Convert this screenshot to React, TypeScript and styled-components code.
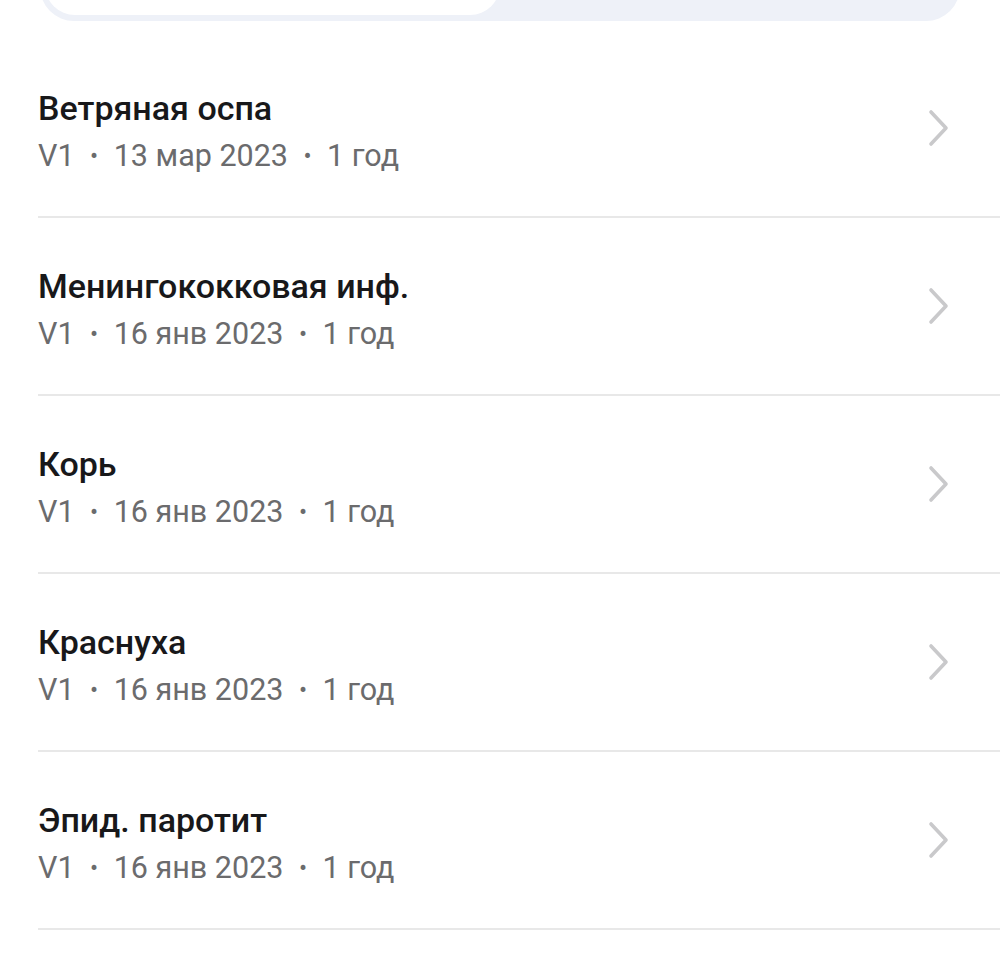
import styled, { createGlobalStyle } from 'styled-components';

const GlobalStyle = createGlobalStyle`
  html, body {
    margin: 0;
    padding: 0;
    background: #ffffff;
    font-family: Roboto, "Noto Sans", Arial, sans-serif;
    overflow: hidden;
  }
`;

const Screen = styled.div`
  width: 1000px;
  height: 962px;
  overflow: hidden;
  background: #ffffff;
`;

const Segmented = styled.div`
  margin: -55px 40px 0 40px;
  height: 76px;
  box-sizing: border-box;
  padding: 6px 5px;
  background: #eef1f8;
  border-radius: 34px;
  display: flex;
`;

const Segment = styled.div<{ $active?: boolean }>`
  flex: 1;
  border-radius: 30px;
  background: ${p => (p.$active ? '#ffffff' : 'transparent')};
`;

const List = styled.ul`
  list-style: none;
  margin: 19px 0 0 38px;
  padding: 0;
`;

const Row = styled.li`
  height: 178px;
  box-sizing: border-box;
  border-bottom: 2px solid #e8e8e8;
  display: flex;
  align-items: center;
  padding-right: 50px;
`;

const Texts = styled.div`
  flex: 1;
  display: flex;
  flex-direction: column;
  gap: 4px;
  padding-top: 8px;
`;

const Title = styled.div`
  font-size: 34px;
  font-weight: 500;
  color: #18181a;
  line-height: 44px;
`;

const Meta = styled.div`
  font-size: 30.5px;
  color: #6b6b6d;
  line-height: 44px;
  display: flex;
  align-items: center;
`;

const Dot = styled.span`
  margin: 0 15.5px;
  font-size: 24px;
`;

const Chevron = () => (
  <svg width="24" height="38" viewBox="0 0 24 38" fill="none">
    <path d="M5 3 L20 19 L5 35" stroke="#c9c9cb" strokeWidth="3.6" strokeLinecap="round" strokeLinejoin="round" />
  </svg>
);

const items = [
  { title: 'Ветряная оспа', date: '13 мар 2023' },
  { title: 'Менингококковая инф.', date: '16 янв 2023' },
  { title: 'Корь', date: '16 янв 2023' },
  { title: 'Краснуха', date: '16 янв 2023' },
  { title: 'Эпид. паротит', date: '16 янв 2023' },
];

export default function App() {
  return (
    <Screen>
      <GlobalStyle />
      <Segmented>
        <Segment $active />
        <Segment />
      </Segmented>
      <List>
        {items.map(item => (
          <Row key={item.title}>
            <Texts>
              <Title>{item.title}</Title>
              <Meta>
                V1<Dot>•</Dot>{item.date}<Dot>•</Dot>1 год
              </Meta>
            </Texts>
            <Chevron />
          </Row>
        ))}
      </List>
    </Screen>
  );
}
